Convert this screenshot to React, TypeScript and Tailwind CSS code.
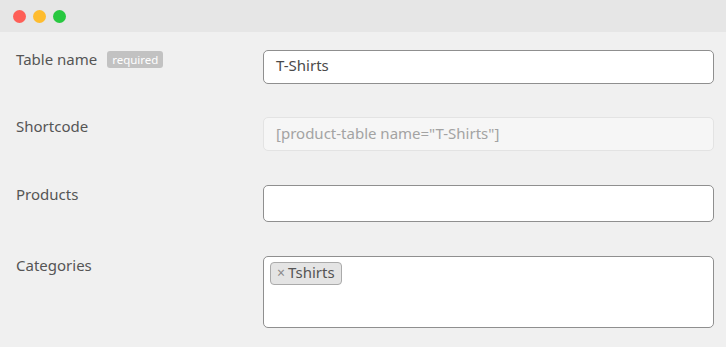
export default function App() {
  return (
    <div className="w-[726px] h-[347px] overflow-hidden bg-[#f0f0f0] font-['Noto_Sans',sans-serif] text-[#555555]">
      {/* title bar */}
      <div className="h-8 bg-[#e6e6e6] flex items-center gap-[7px] pl-[13px]">
        <span className="w-[13px] h-[13px] rounded-full bg-[#fe5f57]" />
        <span className="w-[13px] h-[13px] rounded-full bg-[#febc2e]" />
        <span className="w-[13px] h-[13px] rounded-full bg-[#28c840]" />
      </div>

      <div className="flex flex-col pt-[18px] pl-4 pr-3">
        <div className="flex items-start">
          <div className="w-[247px] flex items-center gap-[10px] leading-5 -mt-[1px]">
            <span className="text-[15px]">Table name</span>
            <span className="text-[11.5px] leading-[17px] px-[5px] rounded-[3px] bg-[#c2c2c2] text-white">
              required
            </span>
          </div>
          <div className="w-[451px] h-[34px] bg-white border border-[#8f8f8f] rounded-[5px] flex items-center px-3 pb-[3px] text-[15px] text-[#4a4a4a]">
            T-Shirts
          </div>
        </div>

        <div className="flex items-start mt-[33px]">
          <div className="w-[247px] text-[15px] leading-5 -mt-[1px]">Shortcode</div>
          <div className="w-[451px] h-[34px] bg-[#f6f6f6] border border-[#e3e3e3] rounded-[5px] flex items-center px-3 pb-[2px] text-[15px] text-[#a3a3a3]">
            [product-table name="T-Shirts"]
          </div>
        </div>

        <div className="flex items-start mt-[34px]">
          <div className="w-[247px] text-[15px] leading-5 -mt-[1px]">Products</div>
          <div className="w-[451px] h-[37px] bg-white border border-[#8f8f8f] rounded-[5px]" />
        </div>

        <div className="flex items-start mt-[34px]">
          <div className="w-[247px] text-[15px] leading-5 -mt-[1px]">Categories</div>
          <div className="w-[451px] h-[72px] bg-white border border-[#8f8f8f] rounded-[5px] flex items-start pt-[5px] pl-[6px]">
            <span className="flex items-center h-[23px] px-[6px] pb-[2px] gap-[3px] bg-[#e4e4e4] border border-[#aaaaaa] rounded-[4px] text-[15px] text-[#555]">
              <span className="text-[#8a8a8a] text-[14px]">×</span>
              Tshirts
            </span>
          </div>
        </div>
      </div>
    </div>
  );
}
